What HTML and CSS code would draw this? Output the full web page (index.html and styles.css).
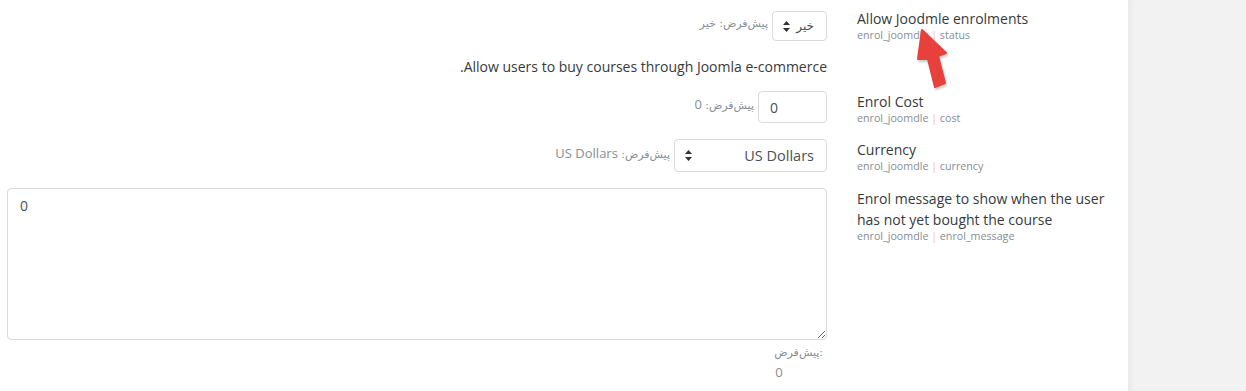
FILE: index.html
```html
<!DOCTYPE html>
<html lang="fa">
<head>
<meta charset="utf-8">
<title>Joomdle enrolment settings</title>
<link rel="stylesheet" href="styles.css">
</head>
<body>
<div class="page">
  <main class="content">
    <div class="setting-row">
      <div class="setting-form">
        <div class="control-line">
          <span class="default" dir="rtl"><span class="ar">پیش‌فرض: خیر</span></span>
          <div class="select select-status">
            <svg class="updown" width="7" height="11" viewBox="0 0 7 11"><path d="M3.5 0 L7 4 L0 4 Z M0 7 L7 7 L3.5 11 Z" fill="#333"/></svg>
            <span class="ar-option" dir="rtl">خیر</span>
          </div>
        </div>
        <p class="desc" dir="rtl">Allow users to buy courses through Joomla e-commerce.</p>
      </div>
      <div class="setting-label">
        <div class="title">Allow Joodmle enrolments</div>
        <div class="shortname">enrol_joomdle <span class="sep">|</span> status</div>
      </div>
    </div>

    <div class="setting-row">
      <div class="setting-form">
        <div class="control-line">
          <span class="default" dir="rtl"><span class="ar">پیش‌فرض:</span> 0</span>
          <input class="text-input" type="text" value="0">
        </div>
      </div>
      <div class="setting-label">
        <div class="title">Enrol Cost</div>
        <div class="shortname">enrol_joomdle <span class="sep">|</span> cost</div>
      </div>
    </div>

    <div class="setting-row">
      <div class="setting-form">
        <div class="control-line">
          <span class="default" dir="rtl"><span class="ar">پیش‌فرض:</span> US Dollars</span>
          <div class="select select-currency">
            <svg class="updown" width="7" height="11" viewBox="0 0 7 11"><path d="M3.5 0 L7 4 L0 4 Z M0 7 L7 7 L3.5 11 Z" fill="#333"/></svg>
            <span>US Dollars</span>
          </div>
        </div>
      </div>
      <div class="setting-label">
        <div class="title">Currency</div>
        <div class="shortname">enrol_joomdle <span class="sep">|</span> currency</div>
      </div>
    </div>

    <div class="setting-row setting-row-last">
      <div class="setting-form">
        <textarea class="textarea">0</textarea>
        <div class="default-block">
          <div class="default-wrap"><span class="ar">پیش‌فرض:</span><br><span class="zero">0</span></div>
        </div>
      </div>
      <div class="setting-label">
        <div class="title">Enrol message to show when the user has not yet bought the course</div>
        <div class="shortname">enrol_joomdle <span class="sep">|</span> enrol_message</div>
      </div>
    </div>
  </main>
  <aside class="sidebar"></aside>

  <svg class="arrow" width="50" height="72" viewBox="0 0 50 72">
    <path d="M17 4 L41 27 L33 30 L40 57 L30 61 L23 33 L13 33 Z" fill="#e8403c" stroke="#e8403c" stroke-width="2" stroke-linejoin="round"/>
  </svg>
</div>
</body>
</html>
```

FILE: styles.css
```css
html, body {
  margin: 0;
  padding: 0;
  background: #fff;
}

body {
  font-family: "Open Sans", "DejaVu Sans", sans-serif;
  font-size: 14px;
  color: #373a3c;
}

.page {
  position: relative;
  display: flex;
  width: 1246px;
  height: 391px;
  overflow: hidden;
}

.content {
  width: 1128px;
  padding: 8px 0 0 7px;
  box-sizing: border-box;
  display: flex;
  flex-direction: column;
  gap: 14px;
}

.sidebar {
  flex: 1;
  background: #f2f2f2;
  border-left: 1px solid #ececec;
  box-shadow: inset 5px 0 4px -3px #e9e9e9;
}

.setting-row {
  display: flex;
  gap: 30px;
  align-items: flex-start;
}

.setting-row-last {
  margin-top: 1px;
}

.setting-form {
  width: 820px;
  flex: none;
}

.setting-label {
  width: 271px;
  flex: none;
  text-align: left;
}

.title {
  font-size: 14px;
  line-height: 21px;
  color: #373a3c;
}

.shortname {
  font-size: 10.7px;
  line-height: 13px;
  color: #868e96;
}

.sep {
  color: #f3c491;
}

.control-line {
  display: flex;
  justify-content: flex-end;
  align-items: center;
  gap: 4px;
}

.default {
  font-size: 13px;
  color: #868e96;
  margin-top: -6px;
}

.ar {
  font-family: "DejaVu Sans", sans-serif;
  font-size: 11px;
}

.ar-option {
  font-family: "DejaVu Sans", sans-serif;
  font-size: 12px;
}

.select {
  display: flex;
  justify-content: space-between;
  align-items: center;
  box-sizing: border-box;
  border: 1px solid #d9d9d9;
  border-radius: 4px;
  background: #fff;
  color: #495057;
  font-size: 14px;
}

.select-status {
  width: 55px;
  height: 30px;
  padding: 0 12px 0 10px;
  margin-top: 3px;
}

.select-currency {
  width: 153px;
  height: 33px;
  padding: 0 12px 0 10px;
  font-size: 14.5px;
}

.updown {
  display: block;
}

.text-input {
  width: 69px;
  height: 32px;
  box-sizing: border-box;
  border: 1px solid #d9d9d9;
  border-radius: 4px;
  padding: 0 11px;
  font-family: "Open Sans", "DejaVu Sans", sans-serif;
  font-size: 14px;
  color: #495057;
  margin: 0;
}

.desc {
  margin: 15px 0 0 0;
  text-align: right;
  line-height: 21px;
  font-size: 14px;
  color: #373a3c;
}

.textarea {
  display: block;
  width: 820px;
  height: 152px;
  box-sizing: border-box;
  margin: 0;
  border: 1px solid #d9d9d9;
  border-radius: 4px;
  padding: 6px 12px;
  font-family: "Open Sans", "DejaVu Sans", sans-serif;
  font-size: 14px;
  line-height: 21px;
  color: #495057;
  resize: vertical;
}

.default-block {
  display: flex;
  justify-content: flex-end;
  padding-right: 4px;
  margin-top: 2px;
}

.default-wrap {
  direction: ltr;
  text-align: left;
  font-size: 13px;
  line-height: 19px;
  color: #868e96;
}

.zero {
  display: inline-block;
  margin-left: 1px;
  margin-top: 1px;
}

.arrow {
  position: absolute;
  left: 905px;
  top: 26px;
  filter: drop-shadow(1px 2px 1px rgba(0, 0, 0, 0.22));
}
```
